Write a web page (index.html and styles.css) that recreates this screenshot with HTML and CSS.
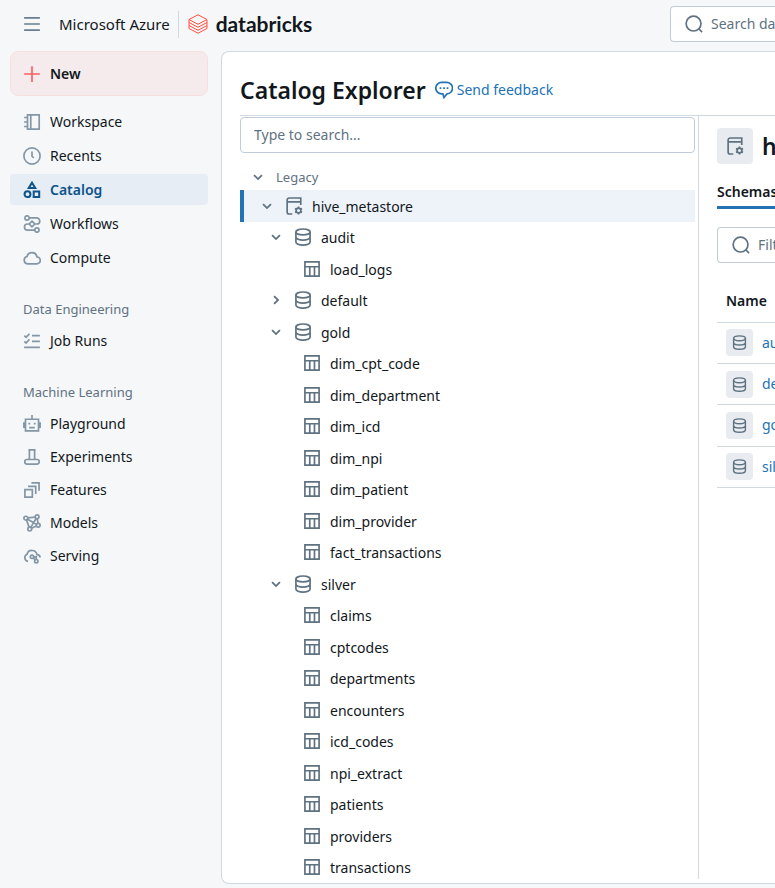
FILE: index.html
```html
<!DOCTYPE html>
<html lang="en">
<head>
<meta charset="utf-8">
<title>Catalog Explorer</title>
<link rel="stylesheet" href="styles.css">
<script src="tree.js" defer></script>
</head>
<body>
<svg class="sprite" aria-hidden="true">
  <symbol id="menu" viewBox="0 0 16 16"><path d="M1 2.5h14M1 8h14M1 13.5h14"/></symbol>
  <symbol id="plus" viewBox="0 0 16 16"><path d="M8 1v14M1 8h14"/></symbol>
  <symbol id="workspace" viewBox="0 0 16 16"><path d="M4 1.600h10.400v12.800H4zM6.900 2v12M1 4h3M1 8h3M1 12h3"/></symbol>
  <symbol id="clock" viewBox="0 0 16 16"><circle cx="8" cy="8" r="7.200"/><path d="M8 4v4.200l1.600 1.600"/></symbol>
  <symbol id="catalog" viewBox="0 0 16 16"><path d="M8 1.500 10.900 6.300H5.100zM9.500 9.300h4.900v4.900H9.500z"/><circle cx="4" cy="11.700" r="2.600"/></symbol>
  <symbol id="workflows" viewBox="0 0 16 16"><circle cx="3.600" cy="2.600" r="1.900"/><circle cx="12.400" cy="13.400" r="1.900"/><path d="M5.500 2.600h6.700a2.700 2.700 0 0 1 0 5.400H10.500M5.500 8H4a2.700 2.700 0 0 0 0 5.400h6.500M8 5.500 10.500 8 8 10.500 5.500 8z"/></symbol>
  <symbol id="cloud" viewBox="0 0 16 16"><path d="M4.100 13.200a3.300 3.300 0 0 1-.5-6.500 4.500 4.500 0 0 1 8.800 0.300 3.100 3.100 0 0 1-.3 6.200z"/></symbol>
  <symbol id="checks" viewBox="0 0 16 16"><path d="M1.200 3.300 2.700 4.800 5.700 1.600M1.200 8.300 2.700 9.800 5.700 6.600M8 3.200h7M8 8.400h7M1 13.700h14"/></symbol>
  <symbol id="robot" viewBox="0 0 16 16"><path d="M2.200 3.800h11.600v10.300H2.200zM8 0v4M.8 6.500v5M15.200 6.500v5M5.500 11.200h5M4.800 7.600h1.600M9.600 7.600h1.600"/></symbol>
  <symbol id="flask" viewBox="0 0 16 16"><path d="M4.800 1.700h6.400M5.700 2v6.800L5.200 10.200M10.300 2v6.800l.5 1.400M3.600 10.200h8.800a2.050 2.050 0 0 1 0 4.100H3.600a2.050 2.050 0 0 1 0-4.100z"/></symbol>
  <symbol id="features" viewBox="0 0 16 16"><path d="M1.700 7.700h6.600v6.600H1.700zM4.500 4.700h6.800V11.500M7.500 1.700h6.800v7"/></symbol>
  <symbol id="models" viewBox="0 0 16 16"><circle cx="2.500" cy="3.700" r="1.700"/><circle cx="12.500" cy="2.500" r="1.700"/><circle cx="13.500" cy="10" r="1.700"/><circle cx="6" cy="13.400" r="1.700"/><path d="M4.200 3.500l6.600-.7M12.700 4.200l.6 4.100M11.900 10.700l-4.300 1.900M3.100 5.400l2.300 6.300M4 4.700l8.100 4.400M11.700 4 6.900 11.900"/></symbol>
  <symbol id="serving" viewBox="0 0 16 16"><path d="M4.500 12.800a3.300 3.300 0 0 1-.9-6.300 4.500 4.500 0 0 1 8.800 0.300c1.500 0 2.700 1 2.800 2.500"/><circle cx="8" cy="8.700" r="1.500"/><circle cx="11.800" cy="12.600" r="1.500"/><path d="M9.100 9.800l1.600 1.700M9.600 8.700h2.200v2.300"/></symbol>
  <symbol id="chat" viewBox="0 0 16 16"><path d="M5.800 1.200h4.400a5.100 5.100 0 0 1 .5 10.200L8 14.700 7 11.400H5.800a5.100 5.100 0 0 1 0-10.200z"/><path d="M4.100 6.400h1.500M7.300 6.400h1.500M10.400 6.400h1.500"/></symbol>
  <symbol id="search" viewBox="0 0 16 16"><circle cx="7.600" cy="7.600" r="6.600"/><path d="M12.200 12.200l3 3"/></symbol>
  <symbol id="down" viewBox="0 0 16 16"><path d="M4.500 6.300 8 9.800l3.500-3.500"/></symbol>
  <symbol id="right" viewBox="0 0 16 16"><path d="M6.300 4.500 9.800 8l-3.500 3.500"/></symbol>
  <symbol id="db" viewBox="0 0 16 16"><ellipse cx="8" cy="3.500" rx="6.300" ry="2.600"/><path d="M1.700 3.500v9c0 1.500 2.800 2.700 6.300 2.700s6.300-1.200 6.300-2.700v-9M1.700 8c0 1.500 2.800 2.700 6.300 2.700s6.300-1.200 6.300-2.700"/></symbol>
  <symbol id="table" viewBox="0 0 16 16"><path d="M1.700 1.700h12.600v12.600H1.700zM1.700 6h12.600M6 6v8.300M10.200 6v8.300"/></symbol>
  <symbol id="store" viewBox="0 0 16 16"><path d="M14 7V.900H3.700c-1 0-1.800.7-1.800 1.700v10.700c0 1 .8 1.800 1.800 1.800H6.500M1.900 4.300H14"/><circle cx="12" cy="12" r="2.100"/><path d="M12 8.400v1.500M12 14.100v1.500M8.900 10.200l1.300.8M13.800 13l1.300.8M8.900 13.800l1.300-.8M13.800 11l1.300-.8"/></symbol>
</svg>

<header class="topbar">
  <div class="brand">
    <button class="menu" aria-label="Menu"><svg class="icon"><use href="#menu"/></svg></button>
    <span class="cloud-name">Microsoft Azure</span>
    <a class="logo" href="#">
      <svg class="logo-mark" viewBox="0 0 20 20"><path d="M1 5.500 10 .8l9 4.700-9 4.800zM1 5.500v3l9 4.800 9-4.800v-2.500M1 8.500v3l9 4.800 9-4.800v-3M1 11.500v3l9 4.700 9-4.700v-3"/></svg>
      <span>databricks</span>
    </a>
  </div>
  <label class="field global-search"><svg class="icon"><use href="#search"/></svg><input type="text" placeholder="Search data" aria-label="Search data"></label>
</header>

<div class="shell">
  <nav class="sidebar">
    <button class="new"><svg class="icon"><use href="#plus"/></svg>New</button>
    <ul class="nav main-nav">
      <li><a href="#"><svg class="icon"><use href="#workspace"/></svg><span>Workspace</span></a></li>
      <li><a href="#"><svg class="icon"><use href="#clock"/></svg><span>Recents</span></a></li>
      <li><a class="active" href="#"><svg class="icon"><use href="#catalog"/></svg><span>Catalog</span></a></li>
      <li><a href="#"><svg class="icon"><use href="#workflows"/></svg><span>Workflows</span></a></li>
      <li><a href="#"><svg class="icon"><use href="#cloud"/></svg><span>Compute</span></a></li>
    </ul>
    <h2>Data Engineering</h2>
    <ul class="nav">
      <li><a href="#"><svg class="icon"><use href="#checks"/></svg><span>Job Runs</span></a></li>
    </ul>
    <h2>Machine Learning</h2>
    <ul class="nav">
      <li><a href="#"><svg class="icon"><use href="#robot"/></svg><span>Playground</span></a></li>
      <li><a href="#"><svg class="icon"><use href="#flask"/></svg><span>Experiments</span></a></li>
      <li><a href="#"><svg class="icon"><use href="#features"/></svg><span>Features</span></a></li>
      <li><a href="#"><svg class="icon"><use href="#models"/></svg><span>Models</span></a></li>
      <li><a href="#"><svg class="icon"><use href="#serving"/></svg><span>Serving</span></a></li>
    </ul>
  </nav>

  <main class="panel">
    <div class="panel-head">
      <h1>Catalog Explorer</h1>
      <a class="feedback" href="#"><svg class="icon"><use href="#chat"/></svg>Send feedback</a>
    </div>
    <div class="columns">
      <section class="browser">
        <label class="field"><input type="text" placeholder="Type to search..." aria-label="Type to search"></label>
        <div class="group"><button class="chevron" aria-label="Toggle Legacy"><svg class="icon"><use href="#down"/></svg></button>Legacy</div>
        <ul class="tree" id="tree"></ul>
      </section>
      <section class="detail">
        <div class="detail-title"><span class="tile"><svg class="icon"><use href="#store"/></svg></span><h2>hive_metastore</h2></div>
        <div class="tabs"><button class="tab">Schemas</button></div>
        <label class="field filter"><svg class="icon"><use href="#search"/></svg><input type="text" placeholder="Filter" aria-label="Filter schemas"></label>
        <table>
          <thead><tr><th>Name</th></tr></thead>
          <tbody>
            <tr><td><a href="#"><span class="tile small"><svg class="icon"><use href="#db"/></svg></span>audit</a></td></tr>
            <tr><td><a href="#"><span class="tile small"><svg class="icon"><use href="#db"/></svg></span>default</a></td></tr>
            <tr><td><a href="#"><span class="tile small"><svg class="icon"><use href="#db"/></svg></span>gold</a></td></tr>
            <tr><td><a href="#"><span class="tile small"><svg class="icon"><use href="#db"/></svg></span>silver</a></td></tr>
          </tbody>
        </table>
      </section>
    </div>
  </main>
</div>
</body>
</html>
```
FILE: tree.js
```js
const schemas = [
  { name: "audit", open: true, tables: ["load_logs"] },
  { name: "default", open: false, tables: [] },
  { name: "gold", open: true, tables: ["dim_cpt_code", "dim_department", "dim_icd", "dim_npi", "dim_patient", "dim_provider", "fact_transactions"] },
  { name: "silver", open: true, tables: ["claims", "cptcodes", "departments", "encounters", "icd_codes", "npi_extract", "patients", "providers", "transactions"] }
];

const icon = (id) => `<svg class="icon"><use href="#${id}"/></svg>`;

function row(level, name, iconId, chevron) {
  const toggle = chevron ? `<button class="chevron" aria-label="Toggle ${name}">${icon(chevron)}</button>` : "";
  return `<li class="${level}">${toggle}<a href="#">${icon(iconId)}<span>${name}</span></a></li>`;
}

const rows = [row("metastore", "hive_metastore", "store", "down")];
for (const s of schemas) {
  rows.push(row("schema", s.name, "db", s.open ? "down" : "right"));
  for (const t of s.tables) rows.push(row("leaf", t, "table"));
}
document.getElementById("tree").innerHTML = rows.join("");
```
FILE: styles.css
```css
* { box-sizing: border-box; }

body {
  margin: 0;
  min-height: 100vh;
  display: flex;
  flex-direction: column;
  overflow-x: hidden;
  background: #f6f7f9;
  color: #11171c;
  font: 14px/20px "Noto Sans", "Open Sans", sans-serif;
}

h1, h2, ul { margin: 0; padding: 0; font-weight: 400; }
ul { list-style: none; }
a { color: inherit; text-decoration: none; }
button { border: 0; padding: 0; background: none; font: inherit; color: inherit; cursor: pointer; }

.sprite { display: none; }

.icon {
  flex: none;
  display: block;
  width: 18px;
  height: 18px;
  fill: none;
  stroke: currentColor;
  stroke-width: 1.5;
}

.topbar {
  display: grid;
  grid-template-columns: 670px minmax(0, 1fr);
  align-items: center;
  height: 51px;
  padding-bottom: 3px;
}

.brand { display: flex; align-items: center; padding-left: 23px; }
.menu { color: #6b7d8c; }
.cloud-name { margin-left: 18px; padding-right: 8px; font-size: 15px; }

.logo {
  display: flex;
  align-items: center;
  gap: 8px;
  height: 27px;
  padding-left: 9px;
  border-left: 1px solid #d1d9e1;
  font: 700 21px/24px Lato, sans-serif;
}

.logo-mark { width: 20px; height: 20px; fill: none; stroke: #ff4c3b; stroke-width: 1; }

.field {
  display: flex;
  align-items: center;
  gap: 8px;
  height: 36px;
  padding: 0 13px;
  border: 1px solid #c0cdd8;
  border-radius: 4px;
  background: #fff;
  color: #5f7281;
}

.field input {
  flex: 1;
  min-width: 0;
  border: 0;
  outline: 0;
  padding: 0;
  background: none;
  font: inherit;
}

.field input::placeholder { color: #5f7281; opacity: 1; }

.global-search, .filter {
  padding: 0 0 0 14px;
  border-right: 0;
  border-radius: 4px 0 0 4px;
}

.shell { flex: 1; display: flex; padding-bottom: 4px; }

.sidebar { flex: none; width: 221px; padding: 0 13px 0 10px; }

.new {
  display: flex;
  align-items: center;
  gap: 9px;
  width: 100%;
  height: 45px;
  padding-left: 12px;
  border: 1px solid #f7dfe0;
  border-radius: 8px;
  background: #f6ebec;
  font-weight: 600;
}

.new .icon { color: #ff5f65; }

.nav { display: grid; gap: 2px; }
.main-nav { gap: 3px; margin-top: 10px; }

.nav a {
  display: flex;
  align-items: center;
  gap: 9px;
  height: 31px;
  padding-left: 13px;
  border-radius: 4px;
}

.nav .icon { color: #8396a5; }

.nav .active { background: #e6edf4; color: #0e538b; font-weight: 600; }
.nav .active .icon { color: #0e538b; stroke-width: 1.8; }

.sidebar h2 {
  margin-top: 26px;
  padding: 0 13px 6px;
  color: #5f7281;
  font-size: 13px;
  line-height: 20px;
}

.panel {
  flex: 1;
  min-width: 0;
  display: flex;
  flex-direction: column;
  padding-left: 18px;
  border: 1px solid #d1d9e1;
  border-right: 0;
  border-radius: 8px 0 0 8px;
  background: #fff;
}

.panel-head {
  display: flex;
  align-items: center;
  gap: 9px;
  height: 64px;
  padding-top: 12px;
  border-bottom: 1px solid #d1d9e1;
}

h1 { font-size: 23px; line-height: 32px; font-weight: 600; }

.feedback { display: flex; align-items: center; gap: 4px; color: #2272b4; }

.columns {
  flex: 1;
  display: grid;
  grid-template-columns: 458px minmax(0, 1fr);
}

.browser { display: flex; flex-direction: column; padding: 1px 3px 0 0; }

.group {
  display: flex;
  align-items: center;
  gap: 9px;
  height: 37px;
  padding: 10px 0 0 9px;
  color: #5f7281;
  font-size: 13px;
}

.chevron { color: #5f7281; }
.chevron .icon { stroke-width: 1.6; }

.tree { flex: 1; display: grid; grid-auto-rows: 1fr; }

.tree li { display: flex; align-items: center; gap: 9px; }
.tree a { display: flex; align-items: center; gap: 9px; }
.tree a .icon { color: #5f7281; }
.tree span { padding-top: 2px; }

.metastore { padding-left: 14px; border-left: 4px solid #2272b4; background: #eef3fa; }
.schema { padding-left: 27px; }
.leaf { padding-left: 63px; }

.detail {
  overflow: hidden;
  margin-bottom: 4px;
  padding: 12px 0 0 18px;
  border-left: 1px solid #d1d9e1;
}

.detail-title { display: flex; align-items: center; gap: 9px; }
.detail h2 { font-size: 23px; line-height: 32px; font-weight: 600; }

.tile {
  flex: none;
  display: grid;
  place-items: center;
  width: 36px;
  height: 36px;
  border-radius: 4px;
  background: #e8ecf0;
  color: #5f7281;
}

.tile.small { width: 27px; height: 27px; }
.tile.small .icon { width: 15px; height: 15px; }

.tabs { margin: 17px 0 18px; }
.tab {
  display: block;
  width: 100%;
  height: 28px;
  padding-bottom: 3px;
  border-bottom: 3px solid #2272b4;
  text-align: left;
  font-weight: 600;
}

table { width: 100%; height: 207px; margin-top: 18px; border-collapse: collapse; }
th { height: 41px; padding: 0 9px; text-align: left; font-weight: 600; border-bottom: 1px solid #d1d9e1; }
td { height: 41px; padding: 0 0 0 9px; border-bottom: 1px solid #d1d9e1; color: #2272b4; }
td a { display: flex; align-items: center; gap: 9px; }
```
